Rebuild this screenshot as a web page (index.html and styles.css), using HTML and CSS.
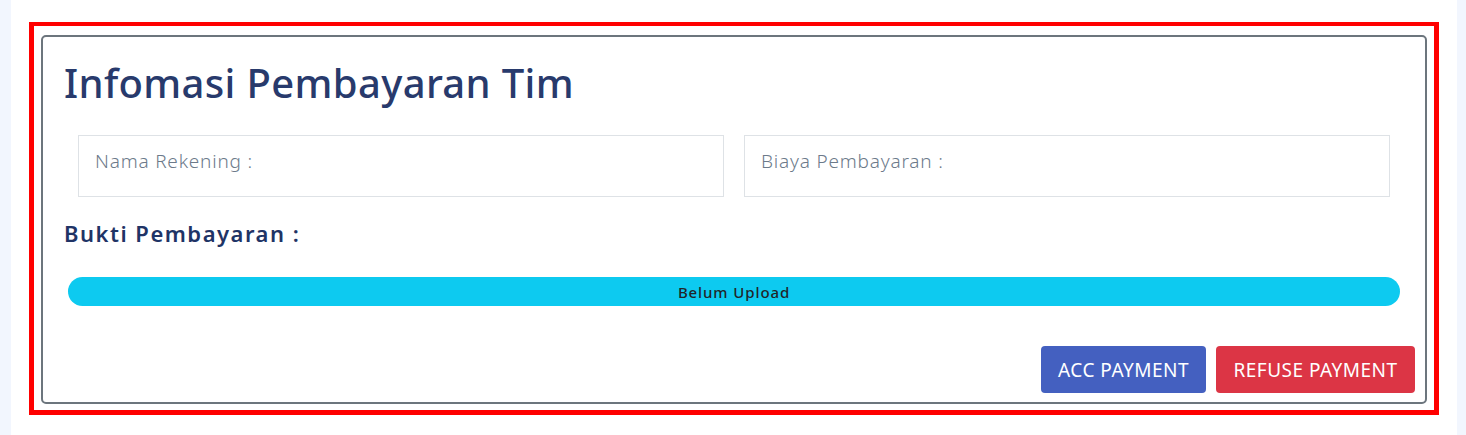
FILE: index.html
```html
<!DOCTYPE html>
<html lang="id">
<head>
<meta charset="utf-8">
<title>Infomasi Pembayaran Tim</title>
<link rel="stylesheet" href="styles.css">
</head>
<body>
<div class="page">
  <div class="highlight">
    <section class="card">
      <h1 class="title">Infomasi Pembayaran Tim</h1>
      <div class="fields">
        <div class="field">Nama Rekening :</div>
        <div class="field">Biaya Pembayaran :</div>
      </div>
      <h2 class="subtitle">Bukti Pembayaran :</h2>
      <div class="progress">
        <div class="progress-bar">Belum Upload</div>
      </div>
      <div class="actions">
        <button class="btn btn-acc">ACC PAYMENT</button>
        <button class="btn btn-refuse">REFUSE PAYMENT</button>
      </div>
    </section>
  </div>
</div>
</body>
</html>
```
FILE: styles.css
```css
* { box-sizing: border-box; }
html, body { margin: 0; padding: 0; }
body {
  background: #f2f6fe;
  font-family: "Noto Sans", "Open Sans", sans-serif;
  height: 435px;
  overflow: hidden;
}
.page {
  margin: 0 9px 0 11px;
  background: #ffffff;
  height: 435px;
  padding: 22px 18px 0 18px;
}
.highlight {
  border: 5px solid #ff0000;
  border-top-width: 4px;
  padding: 9px 7px 6px 7px;
  height: 393px;
}
.card {
  border: 2px solid #6c757d;
  border-radius: 5px;
  height: 100%;
  padding: 0 10px 0 21px;
  display: flex;
  flex-direction: column;
}
.title {
  margin: 22px 0 0 0;
  font-size: 40px;
  line-height: 48px;
  font-weight: 500;
  color: #283a6c;
  letter-spacing: 0.35px;
}
.fields {
  display: grid;
  grid-template-columns: 1fr 1fr;
  gap: 20px;
  margin: 28px 25px 0 14px;
}
.field {
  border: 1px solid #dee2e6;
  height: 62px;
  padding: 13px 16px;
  font-size: 19px;
  line-height: 24px;
  color: #6c7a8a;
  font-weight: 300;
  letter-spacing: 0.8px;
}
.subtitle {
  margin: 21px 0 0 0;
  font-size: 22px;
  line-height: 30px;
  font-weight: 600;
  color: #1f3466;
  letter-spacing: 1.5px;
}
.progress {
  margin: 29px 15px 0 4px;
  height: 29px;
  border-radius: 15px;
  background: #e9ecef;
  overflow: hidden;
  display: flex;
}
.progress-bar {
  flex: 1;
  background: #0dcaf0;
  color: #212529;
  font-size: 15px;
  font-weight: 500;
  letter-spacing: 0.9px;
  display: flex;
  align-items: center;
  justify-content: center;
  padding-top: 1px;
}
.actions {
  margin-top: 40px;
  display: flex;
  justify-content: flex-end;
  gap: 10px;
}
.btn {
  border: none;
  border-radius: 4px;
  height: 47px;
  color: #ffffff;
  font-family: "Noto Sans", "Open Sans", sans-serif;
  font-size: 19px;
  font-weight: 400;
  letter-spacing: 0.5px;
  padding: 0 8px;
}
.btn-acc { background: #4460c0; width: 165px; }
.btn-refuse { background: #dc3545; width: 199px; }
```
